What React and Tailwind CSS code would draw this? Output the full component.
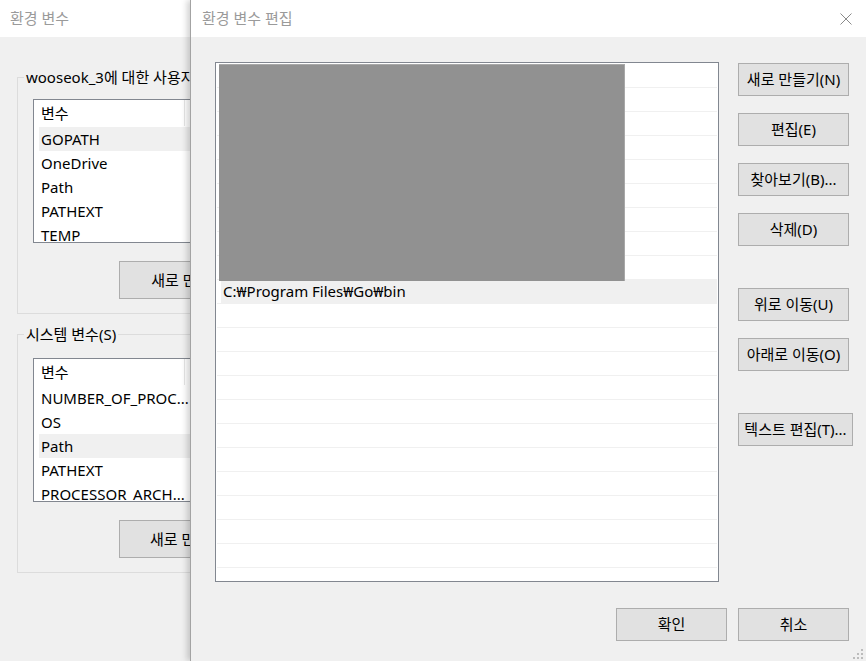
import React from 'react'

const userVars = ['GOPATH', 'OneDrive', 'Path', 'PATHEXT', 'TEMP']
const sysVars = ['NUMBER_OF_PROC...', 'OS', 'Path', 'PATHEXT', 'PROCESSOR_ARCH...']

function Btn({ children, className = '' }) {
  return (
    <div className={`flex items-center justify-center bg-[#e1e1e1] border border-[#adadad] text-[15px] text-black whitespace-nowrap ${className}`}>
      {children}
    </div>
  )
}

function VarList({ items, selected }) {
  return (
    <div className="w-[340px] h-[144px] border border-[#828790] bg-white overflow-hidden">
      <div className="relative h-[27px] flex items-center pl-[7px]">
        변수
        <span className="absolute left-[150px] top-0 h-[26px] w-px bg-[#e5e5e5]" />
      </div>
      {items.map((v, i) => (
        <div
          key={v + i}
          className={`h-[24px] ml-[5px] pl-[2px] flex items-center ${i === selected ? 'bg-[#f0f0f0]' : ''}`}
        >
          {v}
        </div>
      ))}
    </div>
  )
}

function BackWindow() {
  return (
    <div className="absolute left-0 top-0 w-[420px] h-[661px] bg-[#f0f0f0] flex flex-col">
      {/* title bar */}
      <div className="h-[37px] bg-white flex items-center pl-[10px] text-[15px] text-[#9a9a9a]">환경 변수</div>

      <fieldset className="ml-[17px] mr-[17px] mt-[30px] border border-[#dcdcdc] px-[15px] pb-[14px]">
        <legend className="-ml-[9px] px-[2px] leading-[20px]">wooseok_3에 대한 사용자 변수(U)</legend>
        <div className="mt-[12px]">
          <VarList items={userVars} selected={0} />
        </div>
        <Btn className="mt-[18px] ml-[86px] w-[170px] h-[38px]">새로 만들기(N)...</Btn>
      </fieldset>

      <fieldset className="ml-[17px] mr-[17px] mt-[10px] border border-[#dcdcdc] px-[15px] pb-[14px]">
        <legend className="-ml-[9px] px-[2px] leading-[20px]">시스템 변수(S)</legend>
        <div className="mt-[14px]">
          <VarList items={sysVars} selected={2} />
        </div>
        <Btn className="mt-[18px] ml-[86px] w-[170px] h-[38px]">새로 만들기(W)...</Btn>
      </fieldset>
    </div>
  )
}

export default function App() {
  const rows = Array.from({ length: 22 })

  return (
    <div className="relative w-[866px] h-[661px] overflow-hidden bg-[#f0f0f0] text-[15px] text-black font-['Noto_Sans','Noto_Sans_CJK_KR',sans-serif]">
      <BackWindow />

      {/* Front dialog */}
      <div className="absolute left-[190px] top-0 w-[676px] h-[661px] flex flex-col border-l border-[#a3a3a3] shadow-[-3px_0_6px_rgba(0,0,0,0.18)]">
        <div className="h-[37px] bg-white flex items-center justify-between pl-[11px] pr-[14px]">
          <span className="text-[15px] text-[#9a9a9a]">환경 변수 편집</span>
          <svg width="12" height="12" viewBox="0 0 12 12" className="mt-[1px]">
            <path d="M0.5 0.5 L11.5 11.5 M11.5 0.5 L0.5 11.5" stroke="#8a8a8a" strokeWidth="1" fill="none" />
          </svg>
        </div>

        <div className="relative flex-1 bg-[#f0f0f0] flex flex-col">
          <div className="flex pt-[25px] pl-[24px]">
            <div className="relative w-[504px] h-[520px] border border-[#828790] bg-white overflow-hidden pt-[1px]">
              {rows.map((_, i) => (
                <div key={i} className="h-[24px] mx-[1px] border-b border-[#f0f0f0]">
                  {i === 9 && (
                    <div className="h-full ml-[4px] pl-[2px] bg-[#f0f0f0] flex items-center">C:₩Program Files₩Go₩bin</div>
                  )}
                </div>
              ))}
              {/* redacted area */}
              <div className="absolute left-[3px] top-[1px] w-[406px] h-[217px] bg-[#919191] border-t border-r border-[#a8a8a8]" />
            </div>

            <div className="ml-[19px] pt-[1px] flex flex-col">
              <Btn className="w-[111px] h-[33px]">새로 만들기(N)</Btn>
              <Btn className="w-[111px] h-[33px] mt-[17px]">편집(E)</Btn>
              <Btn className="w-[111px] h-[33px] mt-[17px]">찾아보기(B)...</Btn>
              <Btn className="w-[111px] h-[33px] mt-[17px]">삭제(D)</Btn>
              <Btn className="w-[111px] h-[33px] mt-[42px]">위로 이동(U)</Btn>
              <Btn className="w-[111px] h-[33px] mt-[17px]">아래로 이동(O)</Btn>
              <Btn className="w-[115px] h-[33px] mt-[42px]">텍스트 편집(T)...</Btn>
            </div>
          </div>

          <div className="flex justify-end gap-[11px] mt-[26px] pr-[17px]">
            <Btn className="w-[111px] h-[33px]">확인</Btn>
            <Btn className="w-[111px] h-[33px]">취소</Btn>
          </div>

          {/* size grip */}
          <svg width="14" height="14" viewBox="0 0 14 14" className="absolute right-0 bottom-0">
            <rect x="9" y="2" width="2" height="2" fill="#bcbcbc" />
            <rect x="5" y="6" width="2" height="2" fill="#bcbcbc" />
            <rect x="9" y="6" width="2" height="2" fill="#bcbcbc" />
            <rect x="1" y="10" width="2" height="2" fill="#bcbcbc" />
            <rect x="5" y="10" width="2" height="2" fill="#bcbcbc" />
            <rect x="9" y="10" width="2" height="2" fill="#bcbcbc" />
          </svg>
        </div>
      </div>
    </div>
  )
}
